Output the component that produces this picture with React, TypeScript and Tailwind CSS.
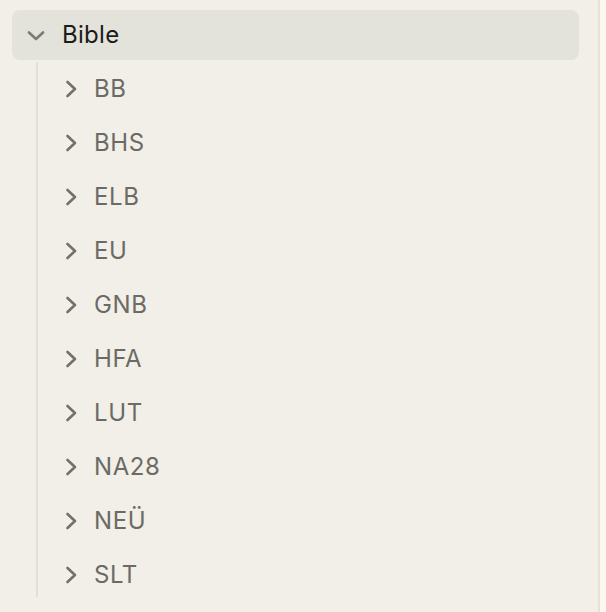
import React from "react";

const items = ["BB", "BHS", "ELB", "EU", "GNB", "HFA", "LUT", "NA28", "NEÜ", "SLT"];

function ChevronDown() {
  return (
    <svg width="18" height="10" viewBox="0 0 18 10" fill="none">
      <path d="M2 1.5 L9 8 L16 1.5" stroke="#7b7a75" strokeWidth="2.6" strokeLinecap="round" strokeLinejoin="round" />
    </svg>
  );
}

function ChevronRight() {
  return (
    <svg width="13" height="18" viewBox="0 0 13 18" fill="none">
      <path d="M2.5 2 L10 9 L2.5 16" stroke="#72716c" strokeWidth="2.6" strokeLinecap="round" strokeLinejoin="round" />
    </svg>
  );
}

export default function App() {
  return (
    <div className="flex w-[606px] h-[612px] bg-[#fbf8ef] overflow-hidden" style={{ fontFamily: "Inter, 'Liberation Sans', sans-serif" }}>
      <div className="w-[600px] h-full bg-[#f1efe8] border-r-2 border-[#e5e2da] pl-3 pt-[10px]">
        <div className="w-[567px] h-[50px] rounded-lg bg-[#e3e3dc] flex items-center">
          <div className="ml-[15px] w-[18px] flex items-center mt-[1px]">
            <ChevronDown />
          </div>
          <span className="ml-[17px] text-[24px] tracking-[0.3px] text-[#1c1c1c] leading-none">Bible</span>
        </div>
        <div className="ml-[24px] mt-[2px] border-l-2 border-[#e2dfd7] h-[535px]">
          {items.map((it) => (
            <div key={it} className="h-[54px] flex items-center">
              <div className="ml-[27px] w-[13px] flex items-center">
                <ChevronRight />
              </div>
              <span className="ml-[16px] text-[24px] tracking-[0.6px] text-[#6b6a65] leading-none">{it}</span>
            </div>
          ))}
        </div>
      </div>
    </div>
  );
}
